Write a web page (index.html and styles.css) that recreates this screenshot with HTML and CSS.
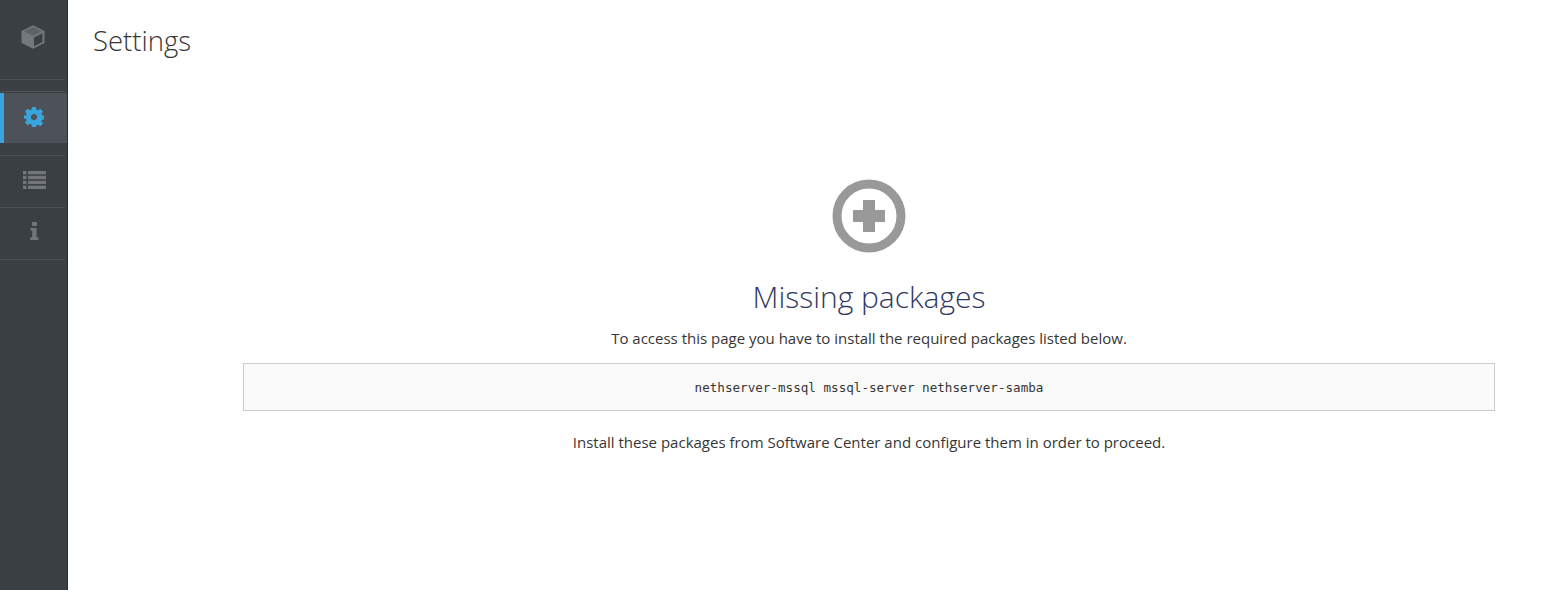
FILE: index.html
```html
<!DOCTYPE html>
<html lang="en">
<head>
	<meta charset="UTF-8">
	<link rel="stylesheet" href="styles.css">
	<title>Settings</title>
</head>
<body>

<div class="app">
	<nav class="sidebar">
		<div class="brand">
			<svg class="brand-icon" viewBox="0 0 24 24" width="24" height="24">
				<path d="M12 .2 23.500 6v12L12 23.800.5 18V6z" fill="#74787c"/>
				<path d="M12 2 21 6.300 12 10.800 3 6.300z" fill="#5d6266"/>
				<path d="M13 12.500v8.800l8.500-4.300V8.300z" fill="#393f44"/>
			</svg>
		</div>
		<ul class="nav-list">
			<li class="nav-item active">
				<div class="nav-link">
					<svg viewBox="0 0 20 20" width="20" height="20">
						<path fill="#39a5dc" fill-rule="evenodd" d="M8 0h4l.5 2.700 1.500.6L16.300 1.700 19 4.400l-1.600 2.300.6 1.500 2 .4v3.800l-2 .4-.6 1.500 1.600 2.300-2.700 2.700-2.300-1.600-1.500.6L12 20H8l-.5-2.700-1.500-.6-2.300 1.600L1 15.600l1.600-2.300-.6-1.500-2-.4V8.600l2-.4.6-1.500L1 4.400l2.700-2.700L6 3.300l1.500-.6zM10 7a3 3 0 1 0 0 6 3 3 0 0 0 0-6z"/>
					</svg>
				</div>
			</li>
			<li class="nav-item">
				<div class="nav-link">
					<svg viewBox="0 0 23 18" width="23" height="18">
						<g fill="#72767b">
							<rect x="0" y="0" width="3.500" height="3.400"/><rect x="5" y="0" width="18" height="3.400"/>
							<rect x="0" y="4.800" width="3.500" height="3.400"/><rect x="5" y="4.800" width="18" height="3.400"/>
							<rect x="0" y="9.700" width="3.500" height="3.400"/><rect x="5" y="9.700" width="18" height="3.400"/>
							<rect x="0" y="14.600" width="3.500" height="3.400"/><rect x="5" y="14.600" width="18" height="3.400"/>
						</g>
					</svg>
				</div>
			</li>
			<li class="nav-item">
				<div class="nav-link">
					<svg class="info-icon" viewBox="0 0 9 18" width="9" height="18">
						<path fill="#72767b" d="M2 0h5v4H2zM.5 6H6.500v9.500H8.500V18H.2v-2.500h2V8.500H.5z"/>
					</svg>
				</div>
			</li>
		</ul>
	</nav>

	<main class="content">
		<h1 class="page-title">Settings</h1>
		<div class="empty-state">
			<svg class="empty-icon" viewBox="0 0 74 74" width="74" height="74">
				<circle cx="37" cy="37" r="32" fill="none" stroke="#999" stroke-width="9"/>
				<path fill="#999" d="M31 21h12v10h10v12H43v10H31V43H21V31h10z"/>
			</svg>
			<h2 class="empty-title">Missing packages</h2>
			<p class="empty-text">To access this page you have to install the required packages listed below.</p>
			<pre class="package-list">nethserver-mssql mssql-server nethserver-samba</pre>
			<p class="empty-text">Install these packages from Software Center and configure them in order to proceed.</p>
		</div>
	</main>
</div>

</body>
</html>
```

FILE: styles.css
```css
html, body {
	margin: 0;
	height: 100%;
	overflow: hidden;
	background: #fff;
}

body {
	font-family: "Open Sans", sans-serif;
	color: #363636;
}

.app {
	display: flex;
	height: 590px;
}

/* left nav */
.sidebar {
	width: 67px;
	flex: none;
	background: #3a3f43;
	border-right: 1px solid #292e34;
}

.brand {
	height: 80px;
	box-sizing: border-box;
	border-bottom: 1px solid #4d5258;
	margin-right: 2px;
	display: flex;
	justify-content: center;
	padding-top: 25px;
}

.nav-list {
	list-style: none;
	margin: 11px 0 0;
	padding: 0;
}

.nav-item {
	border-bottom: 1px solid #4d5258;
	margin-right: 2px;
}

.nav-link {
	height: 51px;
	box-sizing: border-box;
	padding: 0 0 3px 4px;
	display: flex;
	align-items: center;
	justify-content: center;
}

.info-icon {
	margin-bottom: 2px;
}

.nav-item.active {
	border-top: 1px solid #4d5258;
	padding: 1px 0 12px;
}

.nav-item.active .nav-link {
	height: 50px;
	background: #4d5258;
	border-left: 4px solid #39a5dc;
	margin-right: -2px;
	padding: 0 3px 2px 0;
}

/* main area */
.content {
	flex: 1;
	padding: 0 53px 0 25px;
}

.page-title {
	margin: 21px 0 0;
	font-size: 27.500px;
	font-weight: 300;
	line-height: 40px;
	color: #363636;
}

.empty-state {
	margin-left: 150px;
	padding-top: 118px;
	text-align: center;
}

.empty-icon {
	display: block;
	margin: 0 auto;
}

.empty-title {
	margin: 26px 0 0;
	font-size: 30px;
	font-weight: 300;
	line-height: 36px;
	color: #30395f;
}

.empty-text {
	margin: 13px 0 0;
	font-size: 15px;
	line-height: 20px;
}

.package-list {
	margin: 15px 0 21px;
	padding: 16px 15px 14px;
	background: #fafafa;
	border: 1px solid #ccc;
	font-family: "DejaVu Sans Mono", monospace;
	font-size: 12.600px;
	line-height: 16px;
	color: #363636;
	text-align: center;
}

.package-list + .empty-text {
	margin-top: 14px;
}
```
